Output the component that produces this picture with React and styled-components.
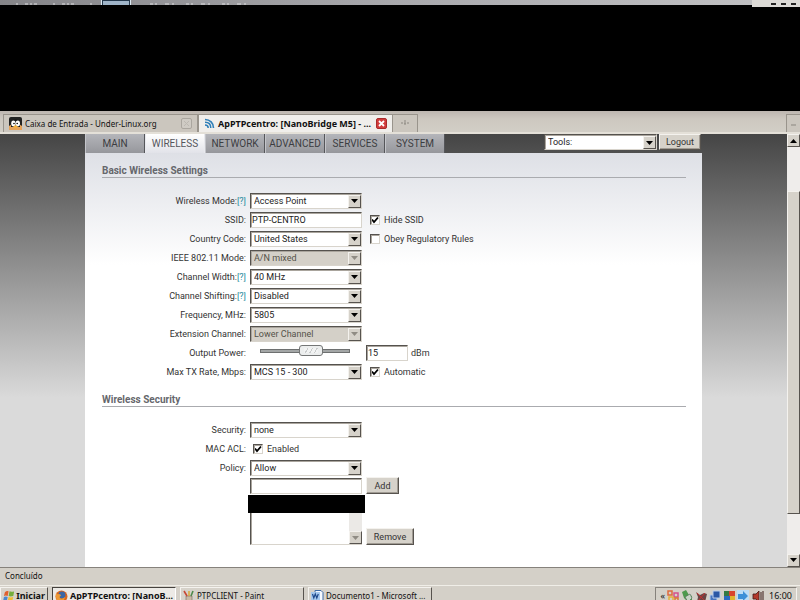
import { useState } from "react";
import styled, { createGlobalStyle, css } from "styled-components";

const GlobalStyle = createGlobalStyle`
	*,
	*::before,
	*::after {
		box-sizing: border-box;
	}

	body {
		margin: 0;
		overflow: hidden;
		font-family: Roboto, "Liberation Sans", Arial, sans-serif;
		font-size: 9px;
		color: #333;
	}

	button,
	input,
	select {
		font: inherit;
		color: inherit;
		margin: 0;
		border-radius: 0;
	}
`;

const systemFont = css`
	font-family: "Noto Sans", "DejaVu Sans Condensed", sans-serif;
	font-size: 8px;
	color: #111;
`;

const systemBold = css`
	font-size: 9px;
	font-weight: bold;
`;

const raised = css`
	background: #d6d2ca;
	border: 1px solid;
	border-color: #f4f2ee #57534e #57534e #f4f2ee;
`;

const Screen = styled.div`
	display: flex;
	flex-direction: column;
	height: 100vh;
	overflow: hidden;
	background: #d4d0c8;
`;

/* Window title */

const TitleBar = styled.header`
	display: flex;
	align-items: flex-end;
	flex: none;
	height: 5px;
	background: linear-gradient(90deg, #858589, #a9a9ad 50%, #c3c3c5);
`;

const TitleHighlight = styled.span`
	flex: none;
	width: 28px;
	height: 5px;
	margin: 0 4px;
	background: #9fb4c8;
	border: 1px solid #24384c;
	border-bottom: 0;
	outline: 1px solid #dceaf4;
`;

const WindowButtons = styled.span`
	display: flex;
	justify-content: flex-end;
	gap: 5px;
	width: 48px;
	height: 7px;
	margin: 0 0 -2px auto;
	padding: 3px 4px;
	background: #dcdad6;
	z-index: 1;

	i {
		width: 5px;
		height: 2px;
		background: #222;
	}
`;

const Blackout = styled.div`
	flex: none;
	height: 106px;
	background: #000;
`;

/* Browser tabs */

const TabStrip = styled.nav`
	${systemFont}
	display: flex;
	align-items: stretch;
	flex: none;
	height: 23px;
	padding: 3px 0 0 3px;
	background: linear-gradient(#bdb6b0, #cdc8c0 8px, #d2cec6);
	border-bottom: 2px solid #e4e0d8;
`;

const BrowserTab = styled.button`
	display: flex;
	align-items: center;
	gap: 3px;
	width: 195px;
	padding: 0 5px;
	text-align: left;
	white-space: nowrap;
	border: 1px solid #99948c;
	border-width: 1px 1px 0 1px;
	background: ${({ $active }) => ($active ? "#f0eeeb" : "#cbc6be")};
	${({ $active }) => $active && systemBold}

	span {
		flex: 1;
	}
`;

const NewTab = styled.button`
	width: 25px;
	padding: 0;
	background: #cbc6be;
	border: 1px solid #99948c;
	border-width: 1px 1px 0 0;
	color: #888;
`;

const TabList = styled(NewTab)`
	width: 14px;
	margin-left: auto;
	border-width: 1px 0 0 1px;
`;

/* Web page */

const Viewport = styled.div`
	display: flex;
	flex: 1;
	min-height: 0;
`;

const Page = styled.main`
	flex: 1;
	display: flex;
	flex-direction: column;
	align-items: center;
	overflow: hidden;
	background: linear-gradient(#454545, #dadada 264px);
`;

const PageHead = styled.div`
	display: flex;
	flex: none;
	width: 78.4%;
	height: 19px;
`;

const MenuLink = styled.a`
	width: 60px;
	font-size: 10px;
	line-height: 20px;
	text-align: center;
	text-decoration: none;
	color: #3c3d41;
	background: linear-gradient(#b4b5ba, #96979c);
	border-right: 1px solid #55565a;
	border-left: 1px solid #c4c5ca;

	${({ $active }) =>
		$active &&
		css`
			color: #55565c;
			background: linear-gradient(#fff, #e2e3e9);
			border-color: #e8e9ee;
		`}
`;

const Tools = styled.div`
	display: flex;
	gap: 2px;
	margin-left: auto;
	padding-right: 1px;
`;

const Content = styled.div`
	flex: 1;
	width: 78.4%;
	padding: 12px 16px 0 17px;
	background: linear-gradient(#dee0e6, #fff 112px);
`;

const SectionTitle = styled.h2`
	margin: 0 0 13px;
	font-size: 10px;
	line-height: 12px;
	color: #66676c;
	border-bottom: 1px solid #aaabaf;
`;

const Section = styled.section`
	margin-bottom: 13px;
`;

const StyledRow = styled.div`
	display: grid;
	grid-template-columns: 144px 112px 1fr;
	column-gap: 4px;
	align-items: center;
	height: 19px;
	white-space: nowrap;
`;

const RowLabel = styled.label`
	text-align: right;
`;

const Help = styled.a`
	color: #278a9c;
	text-decoration: none;
`;

const sunken = css`
	border: 1px solid;
	border-color: #55524e #d8d4cc #d8d4cc #55524e;
	box-shadow: inset 1px 1px 0 #aaa59d;
`;

const SelectBox = styled.div`
	display: grid;
	grid-template-columns: 1fr 14px;
	width: ${({ $width }) => $width || "112px"};
	height: 16px;

	select {
		${sunken}
		grid-area: 1 / 1 / 2 / 3;
		appearance: none;
		min-width: 0;
		padding: 0 16px 0 3px;
		background: #fff;
		color: #222;
		outline: 0;
	}

	select:disabled {
		background: #d4d0c8;
		color: #555249;
		opacity: 1;
	}
`;

const SelectArrow = styled.span`
	${raised}
	grid-area: 1 / 2 / 2 / 3;
	display: grid;
	place-items: center;
	margin: 2px 1px 1px 0;
	pointer-events: none;
	z-index: 1;
`;

const TextInput = styled.input`
	${sunken}
	width: ${({ $width }) => $width || "112px"};
	height: 16px;
	padding: 0 1px;
	background: #fff;
	color: #222;
	outline: 0;
`;

const CheckLabel = styled.label`
	display: flex;
	align-items: center;
	gap: 4px;
	padding-left: ${({ $indent }) => $indent};
`;

const CheckBox = styled.input`
	${sunken}
	appearance: none;
	width: 10px;
	height: 10px;
	background: #fff;

	&:checked {
		background: #fff
			url("data:image/svg+xml,%3Csvg xmlns='http://www.w3.org/2000/svg' viewBox='0 0 8 8'%3E%3Cpath d='M1 3.5 3 6 7 1.5' fill='none' stroke='%23000' stroke-width='1.8'/%3E%3C/svg%3E")
			center / 8px 8px no-repeat;
	}
`;

const Slider = styled.input`
	appearance: none;
	width: 90px;
	height: 12px;
	margin: 0 0 3px 10px;
	background: transparent;

	&::-webkit-slider-runnable-track {
		height: 4px;
		background: #a3a6a6;
		border: 1px solid #6e7070;
	}

	&::-webkit-slider-thumb {
		appearance: none;
		width: 24px;
		height: 11px;
		margin-top: -5px;
		border: 1px solid #747676;
		border-radius: 3px;
		background: repeating-linear-gradient(120deg, #f2f3f3 0 3px, #c9cccc 3px 4px)
				center / 14px 5px no-repeat,
			#eceeee;
	}
`;

const PowerField = styled.label`
	display: flex;
	align-items: center;
	gap: 3px;
`;

const Button = styled.button`
	${raised}
	width: ${({ $width }) => $width};
	height: ${({ $height }) => $height || "16px"};
	padding: 0;
	color: #333;
	box-shadow: inset -1px -1px 0 #a09b93;
`;

const AclGrid = styled.div`
	display: grid;
	grid-template-columns: 112px auto;
	justify-content: start;
	align-items: end;
	gap: 2px 4px;
	padding-left: 148px;
`;

const ListFrame = styled.div`
	position: relative;
	display: flex;
	height: 49px;

	select {
		${sunken}
		flex: 1;
		min-width: 0;
		padding: 0;
		border-right: 0;
		background: #fff;
		outline: 0;
		overflow: hidden;
	}
`;

const ListScroll = styled.div`
	display: flex;
	align-items: flex-end;
	width: 13px;
	background: #ebe9e6;
	border-bottom: 1px solid #d8d4cc;

	span {
		${raised}
		display: grid;
		place-items: center;
		width: 13px;
		height: 13px;
	}
`;

const Redaction = styled.div`
	position: absolute;
	top: -1px;
	right: -3px;
	left: -2px;
	height: 18px;
	background: #000;
`;

const ScrollBar = styled.div`
	display: flex;
	flex-direction: column;
	width: 13px;
	background: #efedeb;
`;

const ScrollButton = styled.button`
	${raised}
	display: grid;
	place-items: center;
	flex: none;
	height: 13px;
	padding: 0;
`;

const ScrollTrack = styled.div`
	flex: ${({ $grow }) => $grow};
`;

const ScrollThumb = styled.div`
	${raised}
	flex: ${({ $grow }) => $grow};
`;

/* Status bar and task bar */

const StatusBar = styled.footer`
	${systemFont}
	flex: none;
	height: 18px;
	padding-left: 5px;
	line-height: 16px;
	border-top: 1px solid #86827c;
	background: #d4d0c8;
`;

const TaskBar = styled.div`
	${systemFont}
	display: flex;
	align-items: flex-start;
	gap: 4px;
	flex: none;
	height: 15px;
	overflow: hidden;
	border-top: 1px solid #f0eee8;
`;

const TaskButton = styled.button`
	${raised}
	display: flex;
	align-items: center;
	gap: 2px;
	flex: none;
	width: ${({ $width }) => $width};
	height: 18px;
	margin-top: 1px;
	padding: 0 2px;
	line-height: 10px;
	white-space: nowrap;
	${({ $bold }) => $bold && systemBold}

	${({ $pressed }) =>
		$pressed &&
		css`
			background: #eceae6;
			border-color: #45423e #fff #fff #45423e;
		`}
`;

const Tray = styled.div`
	display: flex;
	align-items: center;
	gap: 2px;
	height: 18px;
	margin: 1px 3px 0 auto;
	padding: 0 4px;
	font-size: 9px;
	line-height: 10px;
	border: 1px solid #86827c;
	border-right-color: #f4f2ee;

	time {
		margin-left: 3px;
	}
`;

function Arrow({ up, muted }) {
	return (
		<svg width="7" height="4" viewBox="0 0 7 4" aria-hidden="true">
			<path d={up ? "M0 4 3.5 0 7 4z" : "M0 0h7L3.5 4z"} fill={muted ? "#908c84" : "#000"} />
		</svg>
	);
}

// Only the lower edge of the title line is inside the screen
function TitleSpecks({ width, dashes }) {
	return (
		<svg width={width} height="2" viewBox={`0 0 ${width} 2`} aria-hidden="true">
			<path d={`M16 1H${width}`} stroke="#dcdcde" strokeDasharray={dashes} />
		</svg>
	);
}

function TuxIcon() {
	return (
		<svg width="13" height="13" viewBox="0 0 13 13" aria-hidden="true">
			<rect width="13" height="13" rx="2" fill="#222" />
			<path d="M0 13V9l3-2h7l3 2v4z" fill="#e6a35a" />
			<path d="M2 7C2 1 11 1 11 7v3H2z" fill="#151515" />
			<ellipse cx="4.4" cy="6.4" rx="2.2" ry="2.9" fill="#fff" />
			<ellipse cx="8.8" cy="6.4" rx="2.2" ry="2.9" fill="#fff" />
			<circle cx="5" cy="6.5" r=".8" />
			<circle cx="8.2" cy="6.5" r=".8" />
			<path d="M4 9.5 6.5 8 9 9.5l-2.5 2z" fill="#f3b13e" />
		</svg>
	);
}

function AirIcon() {
	return (
		<svg width="11" height="11" viewBox="0 0 11 11" fill="none" stroke="#2f7fb8" aria-hidden="true">
			<path d="M1 1.5C6 1.5 9.5 5 9.5 10" strokeWidth="1.6" />
			<path d="M1 4.3C4.5 4.3 6.8 6.5 6.8 10" strokeWidth="1.5" />
			<path d="M1 7C3 7 4.2 8.2 4.2 10" strokeWidth="1.5" />
		</svg>
	);
}

function CloseIcon({ active }) {
	return (
		<svg width="11" height="11" viewBox="0 0 11 11" aria-hidden="true">
			<rect
				x=".5"
				y=".5"
				width="10"
				height="10"
				rx="1.5"
				fill={active ? "#d13c3c" : "#cfcbc4"}
				stroke={active ? "#a82b2b" : "#aaa69f"}
			/>
			<path
				d="m3 3 5 5M8 3 3 8"
				stroke={active ? "#fff" : "#bcb8b1"}
				strokeWidth={active ? 1.8 : 1}
			/>
		</svg>
	);
}

function WindowsIcon() {
	return (
		<svg width="12" height="12" viewBox="0 0 12 12" aria-hidden="true">
			<path d="M2 2q2-2 4-1L5 6Q3 5 1 6z" fill="#e0602e" />
			<path d="M7 1q2 1 5 0l-1 5q-3 1-5 0z" fill="#74ad3c" />
			<path d="M1 7q2-1 4 0l-1 5q-2-1-4 0z" fill="#4a86cf" />
			<path d="M6 7q2 1 5 0l-1 4q-3 1-5 0z" fill="#f0bd35" />
		</svg>
	);
}

function FirefoxIcon() {
	return (
		<svg width="13" height="13" viewBox="0 0 13 13" aria-hidden="true">
			<circle cx="6.5" cy="6.5" r="6" fill="#d9661f" />
			<circle cx="7" cy="5" r="3.5" fill="#3b66a5" />
			<path d="M1 3q1 2 3 1 2 0 2 2-2 0-1 2 2 2 5-1-1 5-5 5-5-1-4-9" fill="#ed9a35" />
		</svg>
	);
}

function PaintIcon() {
	return (
		<svg width="12" height="13" viewBox="0 0 12 13" aria-hidden="true">
			<path d="M3 6h6v7H3z" fill="#c9b8a4" stroke="#77685a" strokeWidth=".6" />
			<path d="m4 6-3-5" stroke="#c84634" strokeWidth="1.6" />
			<path d="M6 6V1" stroke="#d8a52e" strokeWidth="1.4" />
			<path d="m8 6 2-5" stroke="#4c8a4a" strokeWidth="1.6" />
		</svg>
	);
}

function WordIcon() {
	return (
		<svg width="13" height="13" viewBox="0 0 13 13" aria-hidden="true">
			<path d="M4 .5h6l2 2V13H4z" fill="#f5f9ff" stroke="#3f6ca6" />
			<rect y="2" width="9" height="8" fill="#a6c9ee" />
			<path d="m1.5 4 1.3 4 1.5-4 1.5 4 1.5-4" fill="none" stroke="#1f4a8c" strokeWidth="1.2" />
		</svg>
	);
}

function TrayIcons() {
	return (
		<svg width="97" height="13" viewBox="0 0 97 13" aria-hidden="true">
			<g fill="none" strokeWidth="1.5">
				<path d="M1 1h4v4H1z" stroke="#df6a3c" />
				<path d="M7 3h4v4H7z" stroke="#d4508c" />
				<path d="M2 7h4v5H2z" stroke="#e3b13a" />
				<path d="M8 8h3v4H8z" stroke="#db7a30" />
			</g>
			<path d="m15 2 4-2 3 5 3 1v4l-5 1-3-3z" fill="#4e9a4e" />
			<path d="m18 7 5-3 2 4-4 4z" fill="#c8d4c6" stroke="#56705a" strokeWidth=".7" />
			<path d="m29 2 4 3 4-2 3 1-2 8h-8l1-5z" fill="#6a4545" />
			<path d="m30 3 8 8m0-8-7 8" stroke="#c23131" />
			<path d="M43 5h7v6h-7z" fill="#4674be" stroke="#b8cceb" />
			<path d="M46 1h7v7h-7z" fill="#2b57a5" stroke="#b8cceb" />
			<path d="M57 1h5v5h-5z" fill="#347a43" />
			<path d="M62 1h6v5h-6z" fill="#d9442e" />
			<path d="M57 6h6v7h-6z" fill="#2c6ac0" />
			<path d="M63 6h5v7h-5z" fill="#e0b42f" />
			<path d="M70 0h12v13H70z" fill="#bddcf6" />
			<path d="M71 4h5V1l5 5-5 5V9h-5z" fill="#3d8fd8" />
			<path d="M86 4h3l3-3v11l-3-3h-3z" fill="#b33a2c" stroke="#401a16" strokeWidth=".8" />
			<path d="M94 2v9M96 1v11" stroke="#3d1c18" />
		</svg>
	);
}

function Select({ id, options, disabled, width, label }) {
	return (
		<SelectBox $width={width}>
			<select id={id} disabled={disabled} aria-label={label}>
				{options.map((option) => (
					<option key={option}>{option}</option>
				))}
			</select>
			<SelectArrow>
				<Arrow muted={disabled} />
			</SelectArrow>
		</SelectBox>
	);
}

function Check({ id, children, checked, indent = "4px" }) {
	return (
		<CheckLabel $indent={indent}>
			<CheckBox id={id} type="checkbox" defaultChecked={checked} />
			{children}
		</CheckLabel>
	);
}

function FormRow({ id, label, help, children }) {
	return (
		<StyledRow>
			<RowLabel htmlFor={id}>
				{label}:{help && <Help href="#help">[?]</Help>}
			</RowLabel>
			{children}
		</StyledRow>
	);
}

const menu = ["MAIN", "WIRELESS", "NETWORK", "ADVANCED", "SERVICES", "SYSTEM"];

function BasicSettings() {
	const [power, setPower] = useState(15);
	const changePower = (e) => setPower(Number(e.target.value));

	return (
		<Section>
			<SectionTitle>Basic Wireless Settings</SectionTitle>
			<FormRow id="mode" label="Wireless Mode" help>
				<Select id="mode" options={["Access Point", "Station"]} />
			</FormRow>
			<FormRow id="ssid" label="SSID">
				<TextInput id="ssid" defaultValue="PTP-CENTRO" />
				<Check checked>Hide SSID</Check>
			</FormRow>
			<FormRow id="country" label="Country Code">
				<Select id="country" options={["United States", "Brazil"]} />
				<Check>Obey Regulatory Rules</Check>
			</FormRow>
			<FormRow id="ieee" label="IEEE 802.11 Mode">
				<Select id="ieee" options={["A/N mixed"]} disabled />
			</FormRow>
			<FormRow id="width" label="Channel Width" help>
				<Select id="width" options={["40 MHz", "20 MHz"]} />
			</FormRow>
			<FormRow id="shifting" label="Channel Shifting" help>
				<Select id="shifting" options={["Disabled", "Enabled"]} />
			</FormRow>
			<FormRow id="frequency" label="Frequency, MHz">
				<Select id="frequency" options={["5805", "5785"]} />
			</FormRow>
			<FormRow id="extension" label="Extension Channel">
				<Select id="extension" options={["Lower Channel"]} disabled />
			</FormRow>
			<FormRow id="power" label="Output Power">
				<Slider id="power" type="range" min="0" max="25" value={power} onChange={changePower} />
				<PowerField>
					<TextInput $width="42px" value={power} onChange={changePower} />
					dBm
				</PowerField>
			</FormRow>
			<FormRow id="rate" label="Max TX Rate, Mbps">
				<Select id="rate" options={["MCS 15 - 300", "MCS 14 - 270"]} />
				<Check checked>Automatic</Check>
			</FormRow>
		</Section>
	);
}

function WirelessSecurity() {
	return (
		<Section>
			<SectionTitle>Wireless Security</SectionTitle>
			<FormRow id="security" label="Security">
				<Select id="security" options={["none", "WEP", "WPA"]} />
			</FormRow>
			<FormRow id="acl" label="MAC ACL">
				<Check id="acl" checked indent="3px">
					Enabled
				</Check>
			</FormRow>
			<FormRow id="policy" label="Policy">
				<Select id="policy" options={["Allow", "Deny"]} />
			</FormRow>
			<AclGrid>
				<TextInput aria-label="MAC address" />
				<Button $width="33px" $height="17px">
					Add
				</Button>
				<ListFrame>
					<select multiple aria-label="MAC list" />
					<ListScroll>
						<span>
							<Arrow muted />
						</span>
					</ListScroll>
					<Redaction />
				</ListFrame>
				<Button $width="48px" $height="17px">
					Remove
				</Button>
			</AclGrid>
		</Section>
	);
}

function App() {
	return (
		<Screen>
			<GlobalStyle />
			<TitleBar>
				<TitleSpecks width={98} dashes="2 7 3 2 2 2 3 16" />
				<TitleHighlight />
				<TitleSpecks width={112} dashes="3 2 2 8 4 3 2 12" />
				<WindowButtons>
					<i />
					<i />
					<i />
				</WindowButtons>
			</TitleBar>
			<Blackout />
			<TabStrip>
				<BrowserTab>
					<TuxIcon />
					<span>Caixa de Entrada - Under-Linux.org</span>
					<CloseIcon />
				</BrowserTab>
				<BrowserTab $active>
					<AirIcon />
					<span>ApPTPcentro: [NanoBridge M5] - ...</span>
					<CloseIcon active />
				</BrowserTab>
				<NewTab aria-label="New tab">
					<svg width="8" height="8" viewBox="0 0 8 8" aria-hidden="true">
						<path d="M4 1v6M0 4h8" stroke="#8b8780" strokeDasharray="2 1" />
					</svg>
				</NewTab>
				<TabList aria-label="List tabs">
					<svg width="5" height="3" viewBox="0 0 5 3" aria-hidden="true">
						<path d="M0 1h5" stroke="#8b8780" />
					</svg>
				</TabList>
			</TabStrip>
			<Viewport>
				<Page>
					<PageHead>
						{menu.map((item) => (
							<MenuLink key={item} href={`#${item.toLowerCase()}`} $active={item === "WIRELESS"}>
								{item}
							</MenuLink>
						))}
						<Tools>
							<Select label="Tools" options={["Tools:"]} width="113px" />
							<Button $width="42px">Logout</Button>
						</Tools>
					</PageHead>
					<Content>
						<BasicSettings />
						<WirelessSecurity />
					</Content>
				</Page>
				<ScrollBar>
					<ScrollButton aria-label="Scroll up">
						<Arrow up />
					</ScrollButton>
					<ScrollTrack $grow={44} />
					<ScrollThumb $grow={323} />
					<ScrollTrack $grow={40} />
					<ScrollButton aria-label="Scroll down">
						<Arrow />
					</ScrollButton>
				</ScrollBar>
			</Viewport>
			<StatusBar>Concluído</StatusBar>
			<TaskBar>
				<TaskButton $width="48px" $bold>
					<WindowsIcon />
					Iniciar
				</TaskButton>
				<TaskButton $width="124px" $bold $pressed>
					<FirefoxIcon />
					ApPTPcentro: [NanoB...
				</TaskButton>
				<TaskButton $width="124px">
					<PaintIcon />
					PTPCLIENT - Paint
				</TaskButton>
				<TaskButton $width="124px">
					<WordIcon />
					Documento1 - Microsoft ...
				</TaskButton>
				<Tray>
					«
					<TrayIcons />
					<time>16:00</time>
				</Tray>
			</TaskBar>
		</Screen>
	);
}

export default App;
